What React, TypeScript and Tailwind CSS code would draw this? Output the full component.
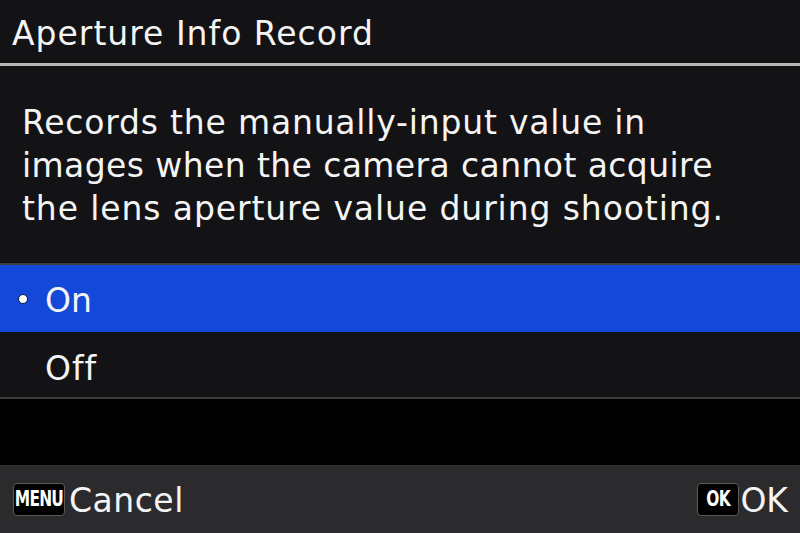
const font = "font-['DejaVu_Sans',sans-serif]";

const KeyBadge = ({ label, wide }: { label: string; wide?: boolean }) => (
    <div
        className={`h-[33px] ${wide ? "w-[52px]" : "w-[42px]"} bg-black border border-[#5a5a5c] rounded-[4px] flex items-center justify-center`}
    >
        <span className="text-white text-[22px] font-bold leading-none font-['DejaVu_Sans_Condensed',sans-serif] scale-x-[0.78] tracking-[-1px]">
            {label}
        </span>
    </div>
);

export default function App() {
    return (
        <div className={`w-[800px] h-[533px] bg-black flex flex-col text-[#f4f4f4] ${font}`}>
            {/* title */}
            <div className="h-[63px] bg-[#131215] px-[12px] flex items-center">
                <div className="text-[33px] leading-none tracking-[1px] pt-[4px]">Aperture Info Record</div>
            </div>
            <div className="h-[3px] bg-[#b8b8b8]"></div>

            {/* description */}
            <div className="h-[197px] bg-[#131215] pl-[22px] pt-[35px] text-[33px] leading-[43px]">
                <div className="tracking-[0.8px]">Records the manually-input value in</div>
                <div className="tracking-[0.4px]">images when the camera cannot acquire</div>
                <div className="tracking-[0.9px]">the lens aperture value during shooting.</div>
            </div>
            <div className="h-[2px] bg-[#3e3d40]"></div>

            {/* options */}
            <div className="h-[67px] bg-[#1448d9] flex items-center">
                <div className="w-[45px] flex justify-center">
                    <div className="w-[10px] h-[10px] rounded-full bg-white border border-[#0b1a3a]"></div>
                </div>
                <div className="text-[33px] leading-none pt-[3px]">On</div>
            </div>
            <div className="h-[65px] bg-[#131215] flex items-center pl-[45px]">
                <div className="text-[33px] leading-none tracking-[1px] pt-[7px]">Off</div>
            </div>
            <div className="h-[2px] bg-[#3e3d40]"></div>

            <div className="flex-1 bg-black"></div>

            {/* footer */}
            <div className="h-[68px] bg-[#2b2a2d] flex items-center justify-between px-[13px] pr-[12px]">
                <div className="flex items-center gap-[4px]">
                    <KeyBadge label="MENU" wide />
                    <span className="text-[33px] leading-none tracking-[0.5px] pt-[2px]">Cancel</span>
                </div>
                <div className="flex items-center gap-[1px]">
                    <KeyBadge label="OK" />
                    <span className="text-[33px] leading-none pt-[2px]">OK</span>
                </div>
            </div>
        </div>
    );
}
